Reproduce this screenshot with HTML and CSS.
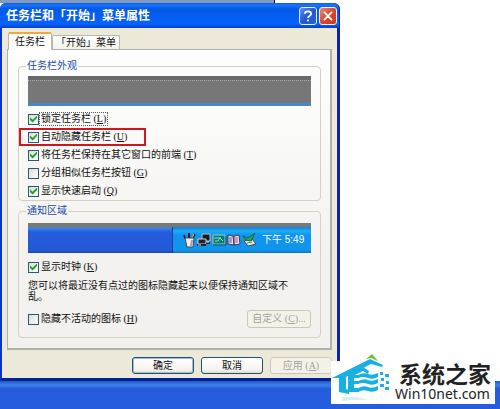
FILE: index.html
```html
<!DOCTYPE html>
<html lang="zh-CN">
<head>
<meta charset="utf-8">
<title>任务栏和「开始」菜单属性</title>
<link rel="stylesheet" href="styles.css">
</head>
<body>
<div class="backdrop"></div>
<main class="dialog">
  <header class="titlebar">
    <h1>任务栏和「开始」菜单属性</h1>
    <button class="caption help" aria-label="帮助"><svg viewBox="0 0 18 18"><path d="M5.500 6.500C5.500 2.800 12.500 2.800 12.500 6.500C12.500 9 9 8.800 9 11.200M9 13v2" fill="none" stroke="#fff" stroke-width="2"/></svg></button>
    <button class="caption close" aria-label="关闭"><svg viewBox="0 0 18 18"><path d="M5 5l8 8M13 5l-8 8" stroke="#fff" stroke-width="2" stroke-linecap="round"/></svg></button>
  </header>
  <div class="content">
    <nav class="tabs">
      <button class="tab active">任务栏</button>
      <button class="tab">「开始」菜单</button>
    </nav>
    <section class="panel">
      <fieldset class="group">
        <legend>任务栏外观</legend>
        <div class="preview gray"></div>
        <div class="options">
          <div class="option"><input type="checkbox" id="lock" checked><label for="lock" class="focused">锁定任务栏 (<u>L</u>)</label></div>
          <div class="option marked"><input type="checkbox" id="hide" checked><label for="hide">自动隐藏任务栏 (<u>U</u>)</label></div>
          <div class="option"><input type="checkbox" id="top" checked><label for="top">将任务栏保持在其它窗口的前端 (<u>T</u>)</label></div>
          <div class="option"><input type="checkbox" id="stack"><label for="stack">分组相似任务栏按钮 (<u>G</u>)</label></div>
          <div class="option"><input type="checkbox" id="quick" checked><label for="quick">显示快速启动 (<u>Q</u>)</label></div>
        </div>
      </fieldset>
      <fieldset class="group notify">
        <legend>通知区域</legend>
        <div class="preview bar">
          <div class="tray">
            <svg class="tray-icons" viewBox="0 0 74 16">
              <g>
                <path d="M3 7l-2-4M6 7V1M9 7l3-5" stroke="#221d38" stroke-width="2"/>
                <path d="M2 3l2 4" stroke="#e34a52"/><path d="M9 6l2-4" stroke="#d8d33b"/>
                <path d="M2 6h9l-1 9H4z" fill="#f4eee9" stroke="#4b4358"/>
                <path d="M8 8h2l-1 6H7z" fill="#a99dac"/>
              </g>
              <g>
                <path d="M19 2h8v7h-8z" fill="#171b2a" stroke="#bdc1bb"/>
                <path d="M15 7h8v5h-8z" fill="#1c2539" stroke="#d4d4c8"/>
                <path d="M14 13h9M23 11h4" stroke="#242430" stroke-width="2"/>
                <path d="M15 13h3M23 10h3" stroke="#e5dfd0"/>
              </g>
              <g>
                <path d="M30 3h12v9H30z" fill="#087c78" stroke="#a5c8be"/>
                <path d="M31 6h7M32 9h3l2-3 3 3" fill="none" stroke="#7ce5b5"/>
                <path d="M30 13h13V4" fill="none" stroke="#164958"/>
              </g>
              <g>
                <path d="M45 3l5 1 1 9-6-1zM56 3l-5 1v9l6-1z" fill="#eee7ef" stroke="#44305f"/>
                <path d="M46 6h3M46 8h3M46 10h3" stroke="#5553ae"/>
                <path d="M52 6h3M52 8h3M52 10h3" stroke="#bd466f"/>
              </g>
              <g>
                <path d="M61 9l8-2 4 5-8 2z" fill="#e7e8da" stroke="#3c5148"/>
                <path d="M60 4l5 2 7-5-4 8-5-1z" fill="#26a950" stroke="#116944"/>
                <path d="M64 11l5-1" stroke="#617d69"/>
              </g>
            </svg>
            <time>下午 5:49</time>
          </div>
        </div>
        <div class="option clock"><input type="checkbox" id="clock" checked><label for="clock">显示时钟 (<u>K</u>)</label></div>
        <p>您可以将最近没有点过的图标隐藏起来以便保持通知区域不乱。</p>
        <div class="inactive">
          <div class="option"><input type="checkbox" id="inactive"><label for="inactive">隐藏不活动的图标 (<u>H</u>)</label></div>
          <button class="button custom" disabled>自定义 (<u>C</u>)...</button>
        </div>
      </fieldset>
    </section>
    <footer class="actions">
      <button class="button default">确定</button>
      <button class="button">取消</button>
      <button class="button" disabled>应用 (<u>A</u>)</button>
    </footer>
  </div>
</main>
<div class="taskbar"></div>
<aside class="watermark">
  <svg viewBox="0 0 60 50">
    <path d="M35 5l6-5 6 7-7-3z" fill="#78bd31"/>
    <path d="M1 24L39 5l13 6-1 2-11-3-25 13v12l3 1v4l-10-2V24z" fill="#18b0e2"/>
    <path d="M17 24v-3l15-8 6 4-1 3-5-3-8 4h4v3h-5v3h5v3h-5v4h5v4H17z" fill="#18b0e2"/>
    <path d="M27 21q6-3 10-1t10-1v4q-5 3-10 1t-10 0zM27 27q6-3 10-1t10-1v4q-5 3-10 1t-10 0zM27 34q6-3 10-1t10-1v4q-5 3-10 1t-10 1z" fill="#18b0e2"/>
    <path d="M49 18h3v3h-3zM54 20h4v3h-4zM50 24h3v3h-3zM55 27h3v3h-3zM49 30h4v3h-4zM54 33h4v3h-4z" fill="#18b0e2"/>
    <path d="M11 43q14-1 26 3-14-1-26 1z" fill="#d6edf4"/>
  </svg>
  <div class="brand"><strong>系统之家</strong><span>Win10net.com</span></div>
</aside>
</body>
</html>
```
FILE: styles.css
```css
* { box-sizing: border-box; }
body {
  margin: 0;
  min-height: 100vh;
  display: flex;
  flex-direction: column;
  position: relative;
  background: #fff;
  color: #111;
  font: 10px/12px "Liberation Serif", "Noto Sans CJK SC", serif;
}
button, input { margin: 0; font: inherit; color: inherit; }
.backdrop {
  width: 55%;
  height: 3px;
  background: #849bc0;
  border-right: 1px solid #111;
}
.dialog {
  width: 68%;
  background: #0b3bd4;
  border: 0 solid #0a36c8;
  border-width: 0 3px 3px 2px;
  border-right-color: #0a24a0;
  border-bottom-color: #04209b;
  border-radius: 6px 6px 0 0;
}
.titlebar {
  display: flex;
  align-items: center;
  gap: 2px;
  height: 25px;
  margin: 0 -2px;
  padding: 1px 2px 0 6px;
  border-radius: 6px 6px 0 0;
  background: linear-gradient(#0a5ae0 0, #1877fa 2px, #0458e6 6px, #0560f5 16px, #0562ff 21px, #0340c8 25px);
}
h1 {
  flex: 1;
  margin: 0;
  color: #fff;
  font: bold 12px/16px "Liberation Serif", "Noto Sans CJK SC", serif;
}
.caption {
  width: 18px;
  height: 18px;
  padding: 0;
  border: 1px solid #e6edfc;
  border-radius: 3px;
}
.caption svg { display: block; width: 16px; height: 16px; }
.help { background: linear-gradient(135deg, #6590ed, #2457d2 50%, #2361e4); }
.close { background: linear-gradient(135deg, #ed8a6d, #da482c 50%, #c83a20); }
.content { padding: 4px 5px 4px; background: #ece9d8; }
.tabs { display: flex; align-items: flex-end; height: 17px; padding-left: 1px; }
.tab {
  height: 14px;
  padding: 0 3px;
  border: 1px solid #b5b8aa;
  border-bottom: 0;
  border-radius: 2px 2px 0 0;
  background: linear-gradient(#fff, #f2f1e9);
  line-height: 14px;
}
.tab.active {
  position: relative;
  height: 18px;
  margin-bottom: -1px;
  padding: 0 6px;
  border-top: 2px solid #f0a73b;
  background: #fdfdfb;
}
.panel {
  padding: 10px 9px 10px 10px;
  border: 1px solid #aeb2a8;
  border-right-width: 2px;
  border-bottom-width: 2px;
  background: linear-gradient(#fefefe, #f3f2ee 70%, #f2f1ed);
}
.group {
  min-width: 0;
  margin: 0 0 4px;
  padding: 4px 9px 0;
  border: 1px solid #d4d1c2;
  border-radius: 4px;
}
.group legend { margin-left: -2px; padding: 0 1px; color: #194cb0; }
.preview { height: 30px; }
.gray {
  background: linear-gradient(#696969 0 4px, transparent 4px 27px, #4588c8 27px), repeating-linear-gradient(90deg, #aaa 0 1px, #777 1px 2px) 0 4px / 100% 1px no-repeat, #777;
}
.options { margin-top: 4px; }
.option { display: flex; align-items: center; gap: 1px; height: 18px; position: relative; }
.option label { padding: 0 1px; }
.option .focused { outline: 1px dotted #555; }
.option input {
  flex: none;
  appearance: none;
  width: 11px;
  height: 11px;
  border: 1px solid #24587e;
  background: linear-gradient(135deg, #dcdcd6, #fff);
}
.option input:checked::after {
  content: "";
  display: block;
  width: 7px;
  height: 7px;
  margin: 1px;
  background: #22a022;
  clip-path: polygon(0 30%, 38% 62%, 100% 0, 100% 36%, 38% 100%, 0 64%);
}
.marked::before {
  content: "";
  position: absolute;
  inset: 0 auto 0 -9px;
  width: 123px;
  border: 2px solid #cf171e;
}
.notify { margin: 0; padding: 6px 9px 9px; }
.bar {
  display: flex;
  justify-content: flex-end;
  padding-top: 4px;
  background: linear-gradient(#77797a 0 4px, #3988ee 5px, #245ddd 9px, #2358d8 27px, #1d46a8);
}
.tray {
  display: flex;
  align-items: center;
  gap: 5px;
  width: 139px;
  padding-left: 10px;
  border-left: 1px solid #0b3b9e;
  background: linear-gradient(#1580db, #18aef5 4px, #1094ee 8px, #1095ed 23px, #1370bd);
  color: #fff;
}
.tray-icons { flex: none; width: 74px; height: 16px; }
time { font-family: "Liberation Sans", "Noto Sans CJK SC", sans-serif; white-space: nowrap; }
.clock { margin-top: 5px; }
p { margin: 4px 0 8px; padding-right: 20px; line-height: 11px; }
.inactive { display: flex; justify-content: space-between; align-items: center; }
.button {
  width: 62px;
  height: 17px;
  padding: 0;
  border: 1px solid #24506e;
  border-radius: 3px;
  background: linear-gradient(#fff, #f3f2ec 80%, #dcd8cc);
}
.default { box-shadow: inset 0 0 0 1px #9ebcec; }
.button:disabled { border-color: #cbc8b9; background: #f4f2e8; color: #a4a298; }
.custom { width: 64px; height: 18px; }
.actions { display: flex; justify-content: flex-end; gap: 7px; padding-top: 7px; }
.taskbar {
  flex: 1;
  background: linear-gradient(#2158bf, #3d82ea 4px, #245bdc 8px, #245edf);
}
.watermark {
  position: absolute;
  right: 5px;
  bottom: 5px;
  display: flex;
  align-items: flex-end;
  width: 164px;
  height: 43px;
  background: #fff;
  color: #222;
}
.watermark svg { flex: none; width: 60px; height: 50px; }
.brand { display: flex; flex-direction: column; height: 43px; padding-left: 4px; white-space: nowrap; }
.brand strong { padding-left: 4px; font: bold 23px/24px "Noto Sans CJK SC", sans-serif; }
.brand span { font: 14px/17px "Noto Sans", sans-serif; }
```
